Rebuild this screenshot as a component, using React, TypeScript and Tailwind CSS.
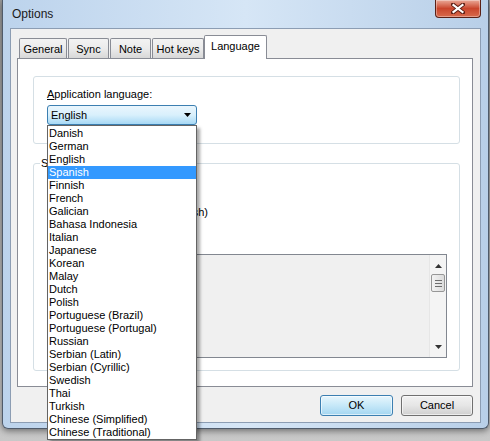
import React from 'react';

const languages = [
  'Danish', 'German', 'English', 'Spanish', 'Finnish', 'French', 'Galician', 'Bahasa Indonesia',
  'Italian', 'Japanese', 'Korean', 'Malay', 'Dutch', 'Polish', 'Portuguese (Brazil)',
  'Portuguese (Portugal)', 'Russian', 'Serbian (Latin)', 'Serbian (Cyrillic)', 'Swedish',
  'Thai', 'Turkish', 'Chinese (Simplified)', 'Chinese (Traditional)',
];

const tabs = [
  { label: 'General', w: 'w-[48px]' },
  { label: 'Sync', w: 'w-[41px]' },
  { label: 'Note', w: 'w-[41px]' },
  { label: 'Hot keys', w: 'w-[52px]' },
];

const CloseButton = () => (
  <div className="w-[46px] h-[18px] rounded-b-[4px] border border-t-0 border-[#5a2016] bg-gradient-to-b from-[#e9a998] via-[#c9452c] to-[#d86a4c] flex items-center justify-center shadow-[inset_0_0_0_1px_rgba(255,255,255,0.35)]">
    <svg width="14" height="11" viewBox="0 0 14 11">
      <path d="M2 1.5 L12 9.5 M12 1.5 L2 9.5" stroke="#5b1e14" strokeWidth="4" strokeLinecap="square" />
      <path d="M2.5 2 L11.5 9 M11.5 2 L2.5 9" stroke="#ffffff" strokeWidth="2.2" strokeLinecap="square" />
    </svg>
  </div>
);

const Scrollbar = () => (
  <div className="w-[17px] h-full bg-[#f4f4f4] border-l border-[#e6e6e6] flex flex-col items-center">
    <div className="h-[17px] w-full flex items-center justify-center mt-[2px]">
      <svg width="7" height="4" viewBox="0 0 7 4"><path d="M0 4 L3.5 0 L7 4 Z" fill="#333" /></svg>
    </div>
    <div className="w-[14px] h-[18px] rounded-[2px] border border-[#979797] bg-gradient-to-r from-[#f3f3f3] to-[#dcdcdc] flex flex-col items-center justify-center gap-[2px]">
      <div className="w-[7px] h-px bg-[#6e6e6e]" />
      <div className="w-[7px] h-px bg-[#6e6e6e]" />
      <div className="w-[7px] h-px bg-[#6e6e6e]" />
    </div>
    <div className="flex-1" />
    <div className="h-[17px] w-full flex items-center justify-center mb-[2px]">
      <svg width="7" height="4" viewBox="0 0 7 4"><path d="M0 0 L7 0 L3.5 4 Z" fill="#333" /></svg>
    </div>
  </div>
);

export default function App() {
  return (
    <div
      className="w-[490px] h-[441px] overflow-hidden bg-gradient-to-b from-[#9a9a9a] to-[#c8c8c8] text-[11px] text-black"
      style={{ fontFamily: '"Liberation Sans", Arial, sans-serif' }}
    >
      {/* window */}
      <div className="ml-[2px] w-[487px] h-[429px] flex flex-col rounded-b-[6px] border border-t-0 border-[#4f5b6b] bg-gradient-to-r from-[#bcd3ec] via-[#d6e6f6] to-[#b8cfe8] px-[7px] pb-[5px] shadow-[0_2px_6px_rgba(0,0,0,0.45)]">
        <div className="h-[28px] flex justify-between shrink-0">
          <div className="pl-[2px] pt-[7px] text-[12px] text-[#1a1a1a] leading-[14px]">Options</div>
          <CloseButton />
        </div>

        <div className="flex-1 flex flex-col bg-[#f0f0f0] border border-[#8c9db3] pl-[6px] pt-[6px]">
          {/* tab headers */}
          <div className="flex items-end h-[23px] pl-[2px] relative z-10">
            {tabs.map((t) => (
              <div
                key={t.label}
                className={`${t.w} h-[20px] mr-px border border-b-0 border-[#898c95] rounded-t-[2px] bg-gradient-to-b from-[#f3f3f3] via-[#ebebeb] to-[#d8d8d8] flex items-center justify-center leading-[13px] pt-[2px]`}
              >
                {t.label}
              </div>
            ))}
            <div className="w-[63px] h-[24px] -ml-px -mb-px border border-b-0 border-[#898c95] rounded-t-[2px] bg-white flex items-center justify-center leading-[13px] pb-[2px]">
              Language
            </div>
          </div>

          {/* tab page */}
          <div className="w-[456px] h-[329px] border border-[#898c95] bg-white flex flex-col px-[15px] pt-[17px]">
            <div className="w-[427px] h-[68px] border border-[#d5dfe5] rounded-[3px] flex flex-col pl-[13px] pt-[11px]">
              <div className="leading-[13px]">
                <span className="underline">A</span>pplication language:
              </div>
              <div className="relative mt-[4px] w-[150px]">
                <div className="h-[20px] rounded-[3px] border border-[#3c7fb1] bg-gradient-to-b from-[#eaf6fd] via-[#d9f0fc] to-[#a7d9f5] flex items-center justify-between pl-[3px] pr-[5px]">
                  <span className="leading-[13px]">English</span>
                  <svg width="7" height="4" viewBox="0 0 7 4"><path d="M0 0 L7 0 L3.5 4 Z" fill="#000" /></svg>
                </div>
                {/* open dropdown list */}
                <div className="absolute left-0 top-[20px] z-20 w-[150px] border border-[#646464] bg-white pt-px shadow-[3px_3px_3px_rgba(0,0,0,0.35)]">
                  {languages.map((l) => (
                    <div
                      key={l}
                      className={`h-[13px] leading-[13px] pl-[1px] ${l === 'Spanish' ? 'bg-[#3399ff] text-white' : ''}`}
                    >
                      {l}
                    </div>
                  ))}
                </div>
              </div>
            </div>

            <div className="relative mt-[19px] w-[427px] h-[208px] border border-[#d5dfe5] rounded-[3px] flex flex-col pl-[13px] pr-[12px]">
              <span className="absolute -top-[7px] left-[6px] bg-white px-[1px] leading-[13px]">S</span>
              <div className="mt-[42px] w-[161px] text-right leading-[13px]">English (British)</div>
              <div className="mt-[35px] h-[104px] border border-[#828790] bg-[#f0f0f0] flex justify-end">
                <Scrollbar />
              </div>
            </div>
          </div>

          {/* buttons */}
          <div className="w-[456px] flex justify-end gap-[8px] mt-[8px]">
            <div className="w-[73px] h-[21px] rounded-[3px] border border-[#3c7fb1] bg-gradient-to-b from-[#e8f6fd] via-[#c6e8f8] to-[#a4d6f1] shadow-[inset_0_0_0_1px_rgba(255,255,255,0.6)] flex items-center justify-center leading-[13px]">
              OK
            </div>
            <div className="w-[72px] h-[21px] rounded-[3px] border border-[#707070] bg-gradient-to-b from-[#f2f2f2] via-[#e6e6e6] to-[#d0d0d0] shadow-[inset_0_0_0_1px_rgba(255,255,255,0.6)] flex items-center justify-center leading-[13px]">
              Cancel
            </div>
          </div>
        </div>
      </div>
    </div>
  );
}
